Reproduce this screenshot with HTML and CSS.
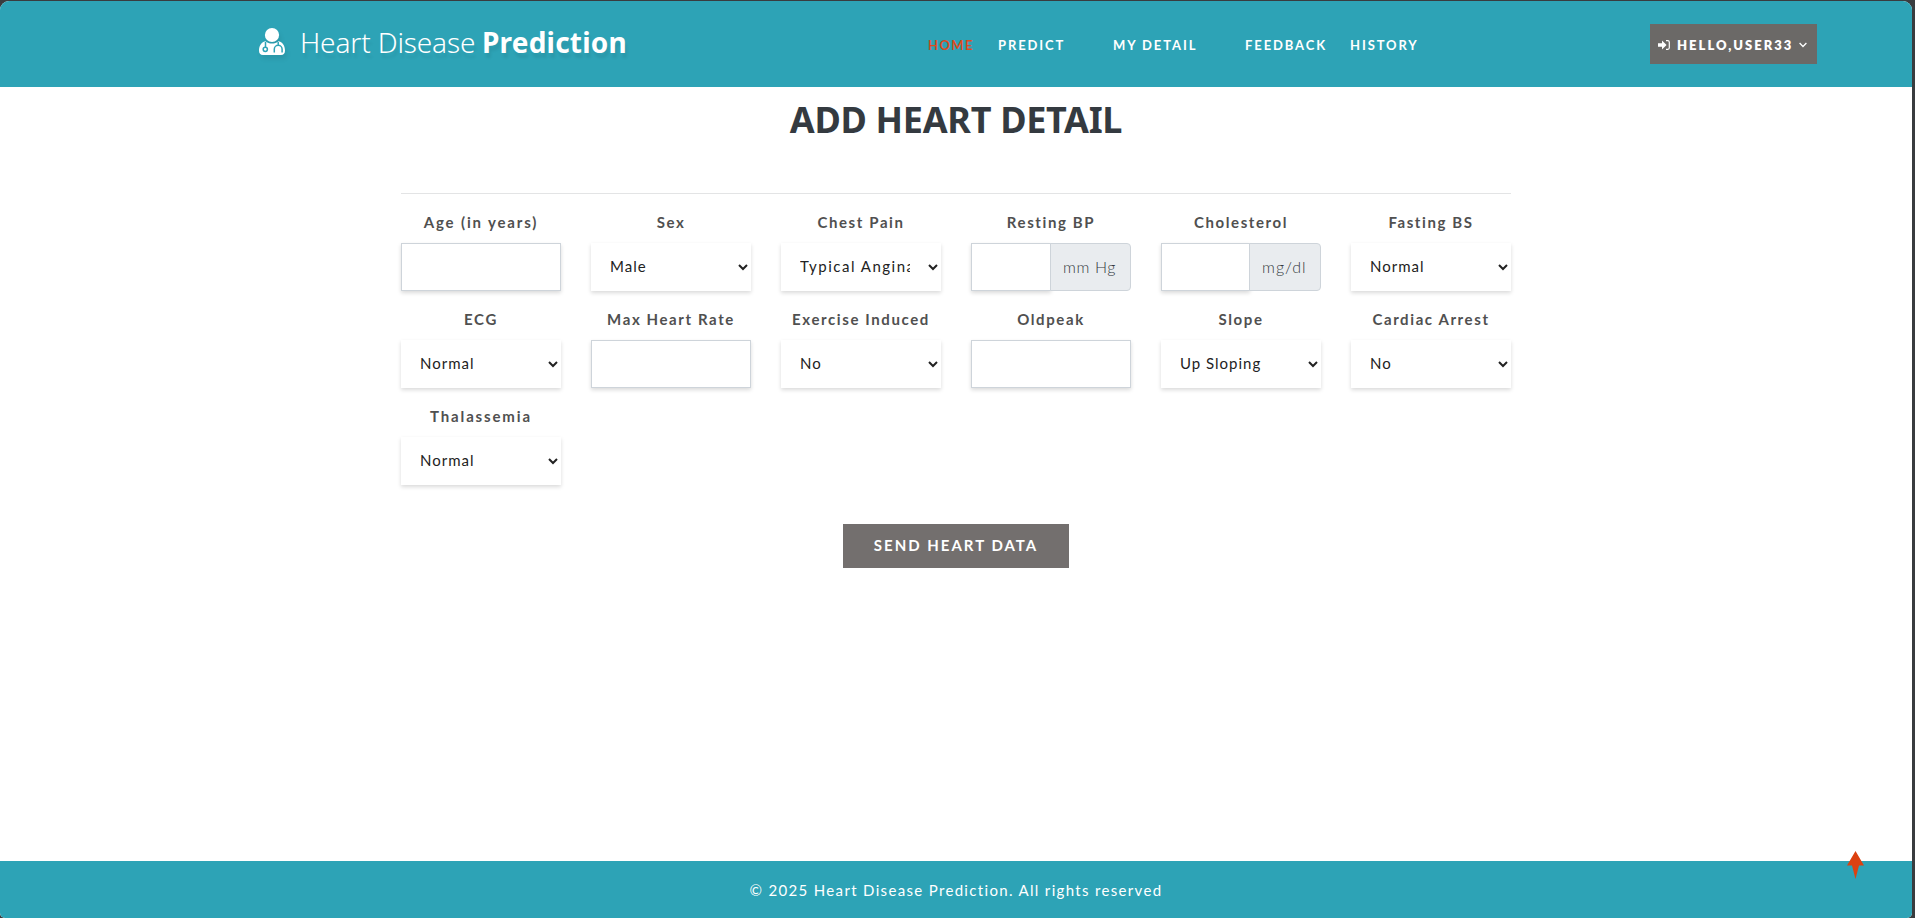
FILE: index.html
```html
<!DOCTYPE html>
<html lang="en">
<head>
<meta charset="utf-8">
<title>Heart Disease Prediction</title>
<link rel="stylesheet" href="styles.css">
</head>
<body>
<div class="page">
  <header class="header">
    <a class="logo">
      <svg class="logo-icon" viewBox="0 0 26 30" width="26" height="30">
        <circle cx="13" cy="8" r="7.1" fill="#fff"/>
        <path d="M6.3 14.2C2 15.5 0 19 0 23.6 0 26.6 1.3 28 4 28h18c2.7 0 4-1.4 4-4.4 0-4.6-2-8.1-6.300-9.400C15.800 17.300 10.200 17.300 6.300 14.200z" fill="#fff"/>
        <path d="M6.500 15v5M19.200 15v3.400M15.300 25.500v-3.300a3.900 3.900 0 0 1 7.800 0v3.300" fill="none" stroke="#2da3b6" stroke-width="1.500"/>
        <circle cx="6.300" cy="22.300" r="2.100" fill="#fff" stroke="#2da3b6" stroke-width="1.500"/>
      </svg>
      <span class="logo-light">Heart Disease</span>
      <span class="logo-bold">Prediction</span>
    </a>
    <nav class="nav">
      <a class="nav-link nav-home active">HOME</a>
      <a class="nav-link nav-predict">PREDICT</a>
      <a class="nav-link nav-detail">MY DETAIL</a>
      <a class="nav-link nav-feedback">FEEDBACK</a>
      <a class="nav-link nav-history">HISTORY</a>
    </nav>
    <button class="user">
      <svg viewBox="0 0 12 10" width="12" height="10" fill="none"><path d="M0 3.200h4V.500L8.600 5 4 9.500V6.800H0z" fill="#fff"/><path d="M8 .700h1.800q1.500 0 1.500 1.500v5.600q0 1.500-1.500 1.500H8" stroke="#fff" stroke-width="1.200"/></svg>
      <span>HELLO,USER33</span>
      <svg viewBox="0 0 8 6" width="8" height="6"><path d="M.6 1L4 4.500 7.400 1" fill="none" stroke="#fff" stroke-width="1.300"/></svg>
    </button>
  </header>
  <main class="main">
    <h1 class="title">ADD HEART DETAIL</h1>
    <form class="form">
      <div class="field"><label class="wide">Age (in years)</label><input class="control"></div>
      <div class="field"><label>Sex</label><select class="control"><option>Male</option></select></div>
      <div class="field"><label>Chest Pain</label><select class="control chest-pain"><option>Typical Angina</option></select></div>
      <div class="field"><label>Resting BP</label><div class="group"><input class="control"><span class="unit unit-bp">mm Hg</span></div></div>
      <div class="field"><label>Cholesterol</label><div class="group"><input class="control"><span class="unit unit-chol">mg/dl</span></div></div>
      <div class="field"><label>Fasting BS</label><select class="control"><option>Normal</option></select></div>
      <div class="field"><label>ECG</label><select class="control"><option>Normal</option></select></div>
      <div class="field"><label>Max Heart Rate</label><input class="control"></div>
      <div class="field"><label>Exercise Induced</label><select class="control"><option>No</option></select></div>
      <div class="field"><label>Oldpeak</label><input class="control"></div>
      <div class="field"><label>Slope</label><select class="control"><option>Up Sloping</option></select></div>
      <div class="field"><label>Cardiac Arrest</label><select class="control"><option>No</option></select></div>
      <div class="field"><label class="wide">Thalassemia</label><select class="control"><option>Normal</option></select></div>
    </form>
    <button class="submit">SEND HEART DATA</button>
  </main>
  <footer class="footer">© 2025 Heart Disease Prediction. All rights reserved</footer>
  <svg class="to-top" viewBox="0 0 17 28" width="17" height="28"><path d="M8.500 0L17 14.500h-5L8.500 28 5 14.500H0z" fill="#dc4110"/></svg>
</div>
</body>
</html>
```
FILE: styles.css
```css
* { box-sizing: border-box; }

body {
  margin: 0;
  height: 918px;
  overflow: hidden;
  background: #393c3f;
  font-family: Lato, "Open Sans", sans-serif;
  letter-spacing: 1px;
}

.page {
  position: relative;
  display: flex;
  flex-direction: column;
  width: 1912px;
  height: 917px;
  margin-top: 1px;
  overflow: hidden;
  border-radius: 9px 9px 5px 5px;
  background: #fff;
}

.header {
  display: flex;
  flex: none;
  height: 86px;
  padding-left: 259px;
  background: #2da3b6;
  color: #fff;
}

.logo {
  display: flex;
  align-items: flex-start;
  width: 669px;
  padding-top: 21px;
  font: 28px/40px "Noto Sans", sans-serif;
  letter-spacing: 0;
  text-shadow: 2px 5px 3px rgba(0, 0, 0, .07);
}

.logo-icon {
  flex: none;
  margin: 5px 15px 0 0;
  filter: drop-shadow(2px 4px 2px rgba(0, 0, 0, .07));
}

.logo-light {
  width: 182px;
  font-weight: 300;
  letter-spacing: -.15px;
  white-space: nowrap;
}

.logo-bold { font-weight: 700; letter-spacing: .2px; }

.nav {
  display: flex;
  width: 722px;
  padding-top: 34px;
}

.nav-link {
  flex: none;
  font-size: 13px;
  line-height: 20px;
  font-weight: 700;
  letter-spacing: 1.9px;
  white-space: nowrap;
}

.active { color: #dc4b20; }
.nav-home { width: 70px; letter-spacing: 1.4px; }
.nav-predict { width: 115px; }
.nav-detail { width: 132px; }
.nav-feedback { width: 105px; }

.user {
  display: flex;
  align-items: center;
  width: 167px;
  height: 40px;
  margin-top: 23px;
  padding: 2px 8px 0;
  border: 0;
  background: #6b6967;
  color: #fff;
  font: 800 13px/20px Lato, sans-serif;
  letter-spacing: 2px;
}

.user span { width: 122px; margin-left: 7px; text-align: left; }

.main {
  display: flex;
  flex: 1;
  flex-direction: column;
  align-items: center;
}

.title {
  margin: 8px 0 0;
  height: 98px;
  color: #343a40;
  font: 700 36px/50px "Noto Sans", sans-serif;
  letter-spacing: -.3px;
}

.form {
  display: grid;
  grid-template-columns: repeat(6, 160px);
  column-gap: 30px;
  align-content: start;
  width: 1110px;
  height: 331px;
  padding-top: 15px;
  border-top: 1px solid #e3e4e5;
}

.field {
  display: flex;
  flex-direction: column;
  height: 97px;
}

.field label {
  height: 34px;
  color: #505050;
  font-size: 15px;
  font-weight: 700;
  letter-spacing: 1.6px;
  line-height: 27px;
  text-align: center;
  white-space: nowrap;
}

.field .wide { letter-spacing: 1.85px; }

.control {
  width: 100%;
  min-width: 0;
  height: 48px;
  padding: 0 15px;
  border: 1px solid #ced4da;
  border-radius: 0;
  outline: 0;
  background: #fff;
  box-shadow: 0 2px 4px rgba(0, 0, 0, .15);
  color: #222;
  font: 400 15px/24px Lato, sans-serif;
  letter-spacing: 1px;
}

select.control { padding-bottom: 2px; border: 0; }
.control.chest-pain { letter-spacing: 1.5px; }

.group { display: flex; height: 48px; }
.group .control { flex: 1; }

.unit {
  position: relative;
  flex: none;
  margin-left: -1px;
  padding: 11px 0 0 12px;
  border: 1px solid #ced4da;
  border-radius: 0 4px 4px 0;
  background: #e9ecef;
  color: #343a40;
  font: 300 16px/24px Lato, sans-serif;
  letter-spacing: .6px;
}

.unit-bp { width: 81px; }
.unit-chol { width: 72px; letter-spacing: 1px; }

.submit {
  width: 226px;
  height: 44px;
  padding: 0 0 2px;
  border: 0;
  background: #736f6e;
  color: #fff;
  font: 700 15px/20px Lato, sans-serif;
  letter-spacing: 2px;
}

.footer {
  flex: none;
  height: 57px;
  padding-top: 19px;
  background: #2da3b6;
  color: #fff;
  font-size: 15px;
  letter-spacing: 1.33px;
  line-height: 20px;
  text-align: center;
}

.to-top {
  position: absolute;
  left: 1847px;
  top: 850px;
}
```
